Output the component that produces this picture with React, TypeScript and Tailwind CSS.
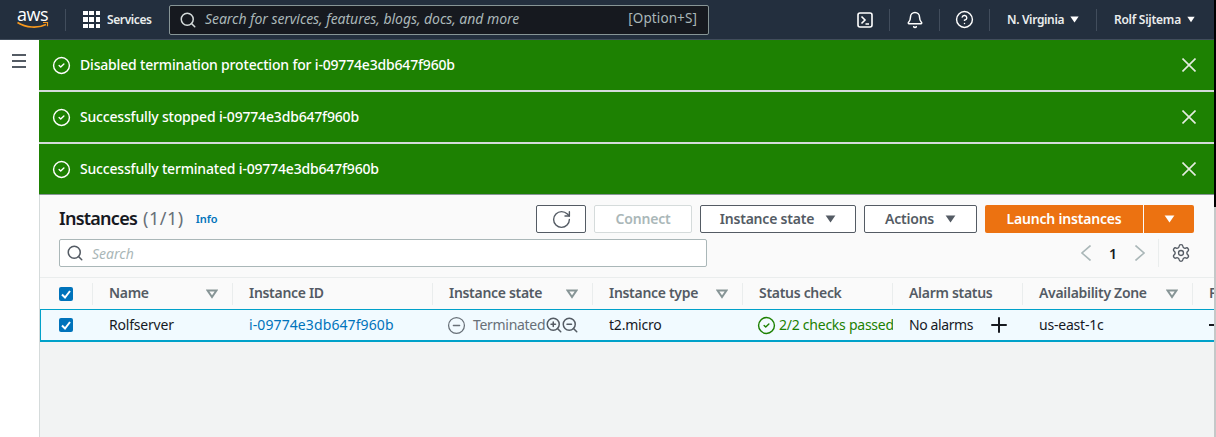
import { CircleCheck, CircleHelp, CircleMinus, Bell, Plus, RotateCw, Search, Settings, ZoomIn, ZoomOut } from "lucide-react";

const font = "font-['Noto_Sans',sans-serif]";

function Caret({ className }: { className?: string }) {
  return (
    <svg viewBox="0 0 12 9" className={className} fill="currentColor">
      <path d="M0.5 0.5h11L6 8.5z" />
    </svg>
  );
}

function FilterCaret() {
  return (
    <svg viewBox="0 0 12 10" className="w-[12px] h-[10px] text-[#879596]" fill="none" stroke="currentColor" strokeWidth="2">
      <path d="M1.5 1.5h9L6 8z" />
    </svg>
  );
}

function Sep() {
  return <div className="w-px h-[22px] shrink-0 bg-[#414d5c]" />;
}

function Cross() {
  return (
    <svg viewBox="0 0 14 14" className="w-[14px] h-[14px] ml-auto text-[#e4ece0]" fill="none" stroke="currentColor" strokeWidth="1.6">
      <path d="M0.5 0.5l13 13M13.5 0.5l-13 13" />
    </svg>
  );
}

function Flash({ text }: { text: string }) {
  return (
    <div className="h-[50px] bg-[#1d8102] flex items-center pl-[13px] pr-[18px] text-white">
      <CircleCheck className="w-[19px] h-[19px] mr-[9px]" strokeWidth={1.8} />
      <span className="text-[14px] font-medium tracking-[-0.18px] mb-[2px]">{text}</span>
      <Cross />
    </div>
  );
}

function Box() {
  return (
    <div className="w-[14px] h-[14px] rounded-[2px] bg-[#0073bb] flex items-center justify-center">
      <svg viewBox="0 0 14 14" className="w-[14px] h-[14px]" fill="none" stroke="white" strokeWidth="2">
        <path d="M3 7.5l3 3L11 4" />
      </svg>
    </div>
  );
}

const columns = "grid grid-cols-[53px_140px_200px_160px_150px_150px_130px_170px_21px]";

function Head({ label, filter }: { label: string; filter?: boolean }) {
  return (
    <div className="h-[22px] pl-[16px] pr-[14px] border-r border-[#eaeded] flex items-center justify-between overflow-hidden">
      <span className="text-[14px] font-semibold tracking-[-0.3px] text-[#545b64] whitespace-nowrap mb-[2px]">{label}</span>
      {filter && <FilterCaret />}
    </div>
  );
}

function Btn({ children, disabled, width }: { children: React.ReactNode; disabled?: boolean; width: string }) {
  return (
    <div
      className={
        width +
        " h-[28px] rounded-[2px] border flex items-center justify-center gap-[11px] text-[14px] font-semibold tracking-[-0.2px] bg-white " +
        (disabled ? "border-[#d5dbdb] text-[#aab7b8]" : "border-[#545b64] text-[#545b64]")
      }
    >
      {children}
    </div>
  );
}

export default function App() {
  return (
    <div className={"w-[1216px] h-[437px] overflow-hidden flex bg-white " + font}>
      <div className="w-[1214px] shrink-0 flex flex-col">
        {/* Top nav */}
        <div className="h-[40px] shrink-0 bg-[#232f3e] border-b border-[#414d5c] flex items-center text-white">
          <div className="w-[65px] h-full relative shrink-0">
            <span className="absolute left-[17px] top-[3px] text-[18px] leading-[22px] tracking-[-0.5px] font-['Open_Sans',sans-serif]">aws</span>
            <svg viewBox="0 0 32 9" className="absolute left-[17px] top-[21px] w-[32px] h-[9px]" fill="none" stroke="#f7981d" strokeWidth="1.6">
              <path d="M0.5 1.5C9 7 21 7.5 29 3.5" />
              <path d="M26 1.5h4.5v3.8" strokeWidth="1.2" />
            </svg>
          </div>
          <Sep />
          <div className="grid grid-cols-3 gap-[2px] w-[17px] ml-[17px] shrink-0">
            {Array.from({ length: 9 }).map((_, i) => (
              <div key={i} className="w-[4.5px] h-[4.5px] bg-white" />
            ))}
          </div>
          <span className="ml-[7px] w-[52px] text-[12px] font-semibold tracking-[-0.4px] text-[#eaeded]">Services</span>
          <div className="w-[540px] h-[30px] ml-[10px] shrink-0 rounded-[2px] bg-[#16191f] border border-[#879596] flex items-center pl-[9px] pr-[11px] text-[#aab7b8]">
            <Search className="w-[18px] h-[18px] text-[#d5dbdb] mr-[8px]" strokeWidth={2} />
            <span className="text-[14px] italic tracking-[-0.05px] mb-[2px]">Search for services, features, blogs, docs, and more</span>
            <span className="ml-auto text-[13.5px] tracking-[0.1px] mb-[2px]">[Option+S]</span>
          </div>
          <svg viewBox="0 0 16 16" className="w-[16px] h-[16px] shrink-0 ml-[148px]" fill="none" stroke="white" strokeWidth="1.6">
            <rect x="1" y="1" width="14" height="14" rx="2" />
            <path d="M4.5 4.5 8 8l-3.5 3.5M8.5 12H12" />
          </svg>
          <div className="ml-[16px]"><Sep /></div>
          <div className="w-[49px] flex justify-center"><Bell className="w-[18px] h-[18px]" strokeWidth={2} /></div>
          <Sep />
          <div className="w-[49px] flex justify-center"><CircleHelp className="w-[19px] h-[19px]" strokeWidth={1.8} /></div>
          <Sep />
          <div className="w-[106px] pl-[17px] flex items-center gap-[6px]">
            <span className="text-[12px] font-semibold tracking-[-0.35px] text-[#eaeded]">N. Virginia</span>
            <Caret className="w-[9px] h-[7px]" />
          </div>
          <Sep />
          <div className="pl-[17px] flex items-center gap-[6px]">
            <span className="text-[12px] font-semibold tracking-[-0.25px] text-[#eaeded]">Rolf Sijtema</span>
            <Caret className="w-[8px] h-[7px]" />
          </div>
        </div>
        <div className="flex-1 flex min-h-0">
          <div className="w-[39px] shrink-0 bg-white pt-[14px] pl-[12px]">
            <div className="w-[14px] flex flex-col gap-[4px]">
              <div className="h-[2px] bg-[#545b64]" />
              <div className="h-[2px] bg-[#545b64]" />
              <div className="h-[2px] bg-[#545b64]" />
            </div>
          </div>
          <div className="w-[1175px] shrink-0 flex flex-col overflow-hidden">
            <div className="flex flex-col gap-[2px] bg-[#d5dbdb] border-b border-[#879596]">
              <Flash text="Disabled termination protection for i-09774e3db647f960b" />
              <Flash text="Successfully stopped i-09774e3db647f960b" />
              <Flash text="Successfully terminated i-09774e3db647f960b" />
            </div>
            <div className="flex-1 border-l border-[#d5dbdb] bg-[#f2f3f3] flex flex-col">
              {/* Toolbar */}
              <div className="bg-[#fafafa] pl-[19px] pr-[20px] pt-[10px] h-[83px] shrink-0 border-b border-[#eaeded]">
                <div className="flex items-center h-[28px]">
                  <span className="text-[18px] font-semibold tracking-[-0.75px] text-[#16191f] mb-[2px]">Instances</span>
                  <span className="text-[18px] text-[#687078] ml-[6px] tracking-[0.5px] mb-[2px]">(1/1)</span>
                  <span className="text-[11px] font-semibold text-[#0073bb] ml-[12px]">Info</span>
                  <div className="ml-auto flex gap-[8px]">
                    <Btn width="w-[50px]"><RotateCw className="w-[21px] h-[21px]" strokeWidth={1.6} /></Btn>
                    <Btn width="w-[98px]" disabled><span className="mb-[2px]">Connect</span></Btn>
                    <Btn width="w-[156px]"><span className="mb-[2px]">Instance state</span><Caret className="w-[11px] h-[8px]" /></Btn>
                    <Btn width="w-[113px]"><span className="mb-[2px]">Actions</span><Caret className="w-[11px] h-[8px]" /></Btn>
                    <div className="flex gap-px h-[28px] text-white">
                      <div className="w-[158px] bg-[#ec7211] rounded-l-[2px] flex items-center justify-center text-[14px] font-semibold tracking-[-0.2px]"><span className="mb-[2px]">Launch instances</span></div>
                      <div className="w-[50px] bg-[#ec7211] rounded-r-[2px] flex items-center justify-center"><Caret className="w-[11px] h-[8px]" /></div>
                    </div>
                  </div>
                </div>
                <div className="flex items-center h-[28px] mt-[6px]">
                  <div className="w-[648px] h-[28px] bg-white border border-[#aab7b8] rounded-[2px] flex items-center pl-[6px]">
                    <Search className="w-[18px] h-[18px] text-[#545b64] mr-[8px]" strokeWidth={2} />
                    <span className="text-[14px] italic text-[#aab7b8]">Search</span>
                  </div>
                  <div className="ml-auto flex items-center h-full text-[#545b64]">
                    <svg viewBox="0 0 10 16" className="w-[10px] h-[16px] text-[#aab7b8]" fill="none" stroke="currentColor" strokeWidth="1.6">
                      <path d="M9.5 0.5 1 8l8.5 7.5" />
                    </svg>
                    <span className="w-[44px] text-center text-[14px] font-semibold text-[#16191f]">1</span>
                    <svg viewBox="0 0 10 16" className="w-[10px] h-[16px] text-[#aab7b8]" fill="none" stroke="currentColor" strokeWidth="1.6">
                      <path d="M0.5 0.5 9 8l-8.5 7.5" />
                    </svg>
                    <div className="w-px h-[28px] bg-[#eaeded] ml-[13px] mr-[12px]" />
                    <Settings className="w-[20px] h-[20px] mr-[3px]" strokeWidth={1.6} />
                  </div>
                </div>
              </div>
              {/* Table */}
              <div className={columns + " h-[31px] shrink-0 bg-[#fafafa] items-center"}>
                <div className="h-[22px] pl-[19px] border-r border-[#eaeded] flex items-center"><Box /></div>
                <Head label="Name" filter />
                <Head label="Instance ID" />
                <Head label="Instance state" filter />
                <Head label="Instance type" filter />
                <Head label="Status check" />
                <Head label="Alarm status" />
                <Head label="Availability Zone" filter />
                <div className="pl-[16px] text-[14px] font-semibold text-[#545b64] mb-[2px]">F</div>
              </div>
              <div className={columns + " h-[33px] shrink-0 bg-[#f1faff] border-t border-[#00a1c9] border-b-2 shadow-[inset_1px_0_0_#00a1c9] items-center text-[14px] tracking-[-0.2px] text-[#16191f]"}>
                <div className="pl-[19px]"><Box /></div>
                <div className="pl-[16px] mb-[2px]">Rolfserver</div>
                <div className="pl-[16px] text-[#0073bb] tracking-[0.1px] mb-[2px]">i-09774e3db647f960b</div>
                <div className="pl-[14px] flex items-center text-[#687078]">
                  <CircleMinus className="w-[19px] h-[19px] mr-[7px]" strokeWidth={1.6} />
                  <span className="tracking-[-0.3px] mb-[2px]">Terminated</span>
                  <ZoomIn className="w-[18px] h-[18px] text-[#545b64]" strokeWidth={2} />
                  <ZoomOut className="w-[18px] h-[18px] -ml-[2px] text-[#545b64]" strokeWidth={2} />
                </div>
                <div className="pl-[16px] mb-[2px]">t2.micro</div>
                <div className="pl-[14px] flex items-center text-[#1d8102] whitespace-nowrap overflow-hidden">
                  <CircleCheck className="w-[19px] h-[19px] mr-[3px] shrink-0" strokeWidth={1.8} />
                  <span className="tracking-[-0.25px] mb-[2px]">2/2 checks passed</span>
                </div>
                <div className="pl-[16px] flex items-center">
                  <span className="tracking-[-0.4px] mb-[2px]">No alarms</span>
                  <Plus className="w-[24px] h-[24px] ml-[14px]" strokeWidth={2} />
                </div>
                <div className="pl-[16px] mb-[2px]">us-east-1c</div>
                <div className="pl-[16px]"><div className="w-[6px] h-[2px] bg-[#16191f]" /></div>
              </div>
            </div>
          </div>
        </div>
      </div>
      {/* Screenshot's right edge */}
      <div className="w-[2px] shrink-0 flex flex-col">
        <div className="h-[207px] bg-black" />
        <div className="flex-1 bg-[#c4c8c8]" />
      </div>
    </div>
  );
}
